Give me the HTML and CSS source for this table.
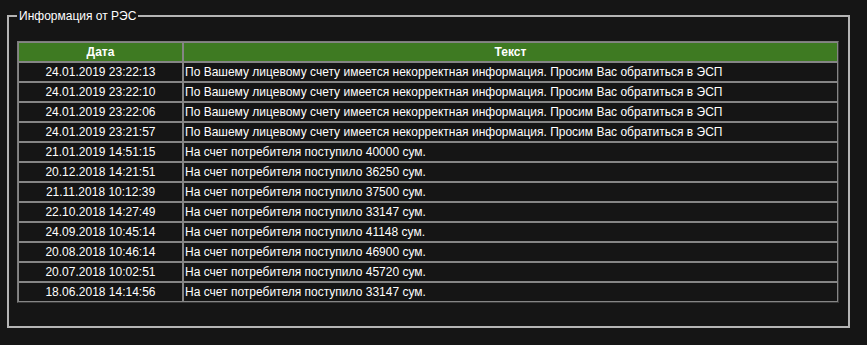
FILE: index.html
```html
<!DOCTYPE html>
<html lang="ru">
<head>
<meta charset="utf-8">
<title>Информация от РЭС</title>
<link rel="stylesheet" href="styles.css">
</head>
<body>
<fieldset class="panel">
  <legend class="panel-title">Информация от РЭС</legend>
  <table class="grid">
    <thead>
      <tr><th class="col-date">Дата</th><th class="col-text">Текст</th></tr>
    </thead>
    <tbody>
      <tr><td class="date">24.01.2019 23:22:13</td><td class="text">По Вашему лицевому счету имеется некорректная информация. Просим Вас обратиться в ЭСП</td></tr>
      <tr><td class="date">24.01.2019 23:22:10</td><td class="text">По Вашему лицевому счету имеется некорректная информация. Просим Вас обратиться в ЭСП</td></tr>
      <tr><td class="date">24.01.2019 23:22:06</td><td class="text">По Вашему лицевому счету имеется некорректная информация. Просим Вас обратиться в ЭСП</td></tr>
      <tr><td class="date">24.01.2019 23:21:57</td><td class="text">По Вашему лицевому счету имеется некорректная информация. Просим Вас обратиться в ЭСП</td></tr>
      <tr><td class="date">21.01.2019 14:51:15</td><td class="text">На счет потребителя поступило 40000 сум.</td></tr>
      <tr><td class="date">20.12.2018 14:21:51</td><td class="text">На счет потребителя поступило 36250 сум.</td></tr>
      <tr><td class="date">21.11.2018 10:12:39</td><td class="text">На счет потребителя поступило 37500 сум.</td></tr>
      <tr><td class="date">22.10.2018 14:27:49</td><td class="text">На счет потребителя поступило 33147 сум.</td></tr>
      <tr><td class="date">24.09.2018 10:45:14</td><td class="text">На счет потребителя поступило 41148 сум.</td></tr>
      <tr><td class="date">20.08.2018 10:46:14</td><td class="text">На счет потребителя поступило 46900 сум.</td></tr>
      <tr><td class="date">20.07.2018 10:02:51</td><td class="text">На счет потребителя поступило 45720 сум.</td></tr>
      <tr><td class="date">18.06.2018 14:14:56</td><td class="text">На счет потребителя поступило 33147 сум.</td></tr>
    </tbody>
  </table>
</fieldset>
</body>
</html>
```
FILE: styles.css
```css
html, body {
  background: #151515;
}
body {
  margin: 0;
  padding: 9px 17px 0 7px;
  font-family: "Liberation Sans", Arial, sans-serif;
  font-size: 12px;
  color: #ffffff;
}
.panel {
  margin: 0;
  padding: 18px 9px 23px 8px;
  border: 2px solid #b4b4b4;
  min-width: 0;
}
.panel-title {
  padding: 0 2px;
  font-size: 12px;
  line-height: 14px;
  color: #ffffff;
}
.grid {
  width: 100%;
  border-collapse: separate;
  border-spacing: 0;
  border-style: solid;
  border-width: 1px;
  border-color: #7c7c7c #3a3a3a #3a3a3a #7c7c7c;
}
.grid th,
.grid td {
  padding: 1px;
  line-height: 16px;
  border: 1px solid #858585;
  white-space: nowrap;
}
.grid th {
  background: #3e7a22;
  font-weight: bold;
  text-align: center;
}
.col-date {
  width: 161px;
}
.date {
  text-align: center;
}
.text {
  text-align: left;
}
```
